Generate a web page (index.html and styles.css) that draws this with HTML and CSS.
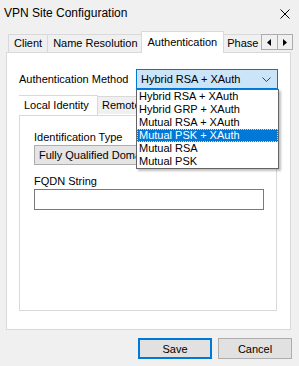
FILE: index.html
```html
<!DOCTYPE html>
<html>
<head>
<meta charset="utf-8">
<link rel="stylesheet" href="styles.css">
</head>
<body>
<div class="dialog">
  <div class="titlebar">
    <span class="title">VPN Site Configuration</span>
    <svg class="close" width="10" height="10" viewBox="0 0 10 10"><path d="M0.5 0.5L9.5 9.5M9.5 0.5L0.5 9.5" stroke="#000" stroke-width="1" fill="none"/></svg>
  </div>
  <div class="tabstrip">
    <div class="tabs">
      <div class="tab first">Client</div>
      <div class="tab">Name Resolution</div>
      <div class="tab selected">Authentication</div>
      <div class="tab">Phase 1</div>
    </div>
    <div class="arrows">
      <div class="arrow"><svg width="5" height="7" viewBox="0 0 5 7"><path d="M4 0L0 3.5L4 7Z" fill="#000"/></svg></div>
      <div class="arrow"><svg width="5" height="7" viewBox="0 0 5 7"><path d="M0 0L4 3.5L0 7Z" fill="#000"/></svg></div>
    </div>
  </div>
  <div class="panel">
    <div class="authrow">
      <span class="label">Authentication Method</span>
      <div class="combo-wrap">
        <div class="combo active">
          <span>Hybrid RSA + XAuth</span>
          <svg class="chev" width="9" height="5" viewBox="0 0 9 5"><path d="M0.5 0.5L4.5 4.5L8.5 0.5" stroke="#444" stroke-width="1" fill="none"/></svg>
        </div>
        <ul class="droplist">
          <li>Hybrid RSA + XAuth</li>
          <li>Hybrid GRP + XAuth</li>
          <li>Mutual RSA + XAuth</li>
          <li class="hl">Mutual PSK + XAuth</li>
          <li>Mutual RSA</li>
          <li>Mutual PSK</li>
        </ul>
      </div>
    </div>
    <div class="innertabs">
      <div class="itab selected">Local Identity</div>
      <div class="itab">Remote Identity</div>
    </div>
    <div class="innerpanel">
      <div class="flabel">Identification Type</div>
      <div class="combo disabled"><span>Fully Qualified Domain Name</span></div>
      <div class="flabel second">FQDN String</div>
      <div class="textbox"></div>
    </div>
  </div>
  <div class="buttons">
    <div class="btn default">Save</div>
    <div class="btn">Cancel</div>
  </div>
</div>
</body>
</html>
```

FILE: styles.css
```css
* { box-sizing: border-box; }
html, body { margin: 0; padding: 0; }
body {
  background: #f0f0f0;
  width: 299px;
  height: 366px;
  overflow: hidden;
  font-family: "Liberation Sans", Arial, sans-serif;
  font-size: 11px;
  color: #000;
}
.dialog { width: 299px; height: 366px; }
.titlebar {
  height: 31px;
  display: flex;
  align-items: flex-start;
  justify-content: space-between;
  padding: 5px 9px 0 4px;
}
.title { font-size: 12px; line-height: 16px; }
.close { margin-top: 4px; }
.tabstrip {
  display: flex;
  align-items: flex-start;
  margin-left: 6px;
  height: 21px;
  position: relative;
  z-index: 2;
}
.tabs {
  display: flex;
  align-items: flex-end;
  width: 255px;
  height: 22px;
  overflow: hidden;
  padding-left: 2px;
}
.tab {
  height: 18px;
  margin-bottom: 1px;
  border: 1px solid #d9d9d9;
  border-bottom: none;
  background: #f0f0f0;
  padding: 0 5px;
  line-height: 16px;
  white-space: nowrap;
  flex: none;
  margin-left: -1px;
}
.tab.first { margin-left: 0; }
.tab.selected {
  height: 22px;
  margin-bottom: 0;
  background: #fff;
  margin-left: -3px;
  margin-right: -2px;
  padding: 0 6px;
  line-height: 20px;
  position: relative;
  z-index: 1;
}
.arrows {
  display: flex;
  margin-top: 3px;
  border: 1px solid #adadad;
  background: #f0f0f0;
}
.arrow {
  width: 15px;
  height: 14px;
  display: flex;
  align-items: center;
  justify-content: center;
}
.arrow + .arrow { border-left: 1px solid #adadad; }
.panel {
  margin-left: 6px;
  width: 285px;
  height: 278px;
  background: #fff;
  border: 1px solid #d9d9d9;
  padding: 16px 12px 0 12px;
}
.authrow {
  display: flex;
  align-items: center;
  height: 20px;
}
.label { width: 117px; }
.combo-wrap { position: relative; z-index: 5; }
.combo {
  height: 20px;
  display: flex;
  align-items: center;
  justify-content: space-between;
  padding: 0 4px 0 4px;
  white-space: nowrap;
  overflow: hidden;
}
.combo.active {
  width: 142px;
  background: #cce4f7;
  border: 1px solid #0078d7;
}
.chev { margin-right: 2px; }
.droplist {
  position: absolute;
  left: 0;
  top: 20px;
  width: 143px;
  margin: 0;
  padding: 0;
  list-style: none;
  background: #fff;
  border: 1px solid #646464;
  box-shadow: 2px 2px 2px rgba(0,0,0,0.25);
}
.droplist li {
  height: 13px;
  line-height: 13px;
  padding-left: 2px;
  white-space: nowrap;
}
.droplist li.hl {
  background: #0078d7;
  color: #fff;
  outline: 1px dotted #e8d8a8;
  outline-offset: -1px;
}
.innertabs {
  display: flex;
  align-items: flex-end;
  height: 20px;
  margin-top: 6px;
  padding-left: 0;
  position: relative;
  z-index: 2;
  width: 117px;
  overflow: hidden;
}
.itab {
  height: 18px;
  margin-bottom: 1px;
  border: 1px solid #d9d9d9;
  border-bottom: none;
  background: #f0f0f0;
  padding: 0 4px;
  line-height: 17px;
  white-space: nowrap;
  flex: none;
}
.itab.selected {
  height: 21px;
  margin-bottom: -1px;
  margin-left: -2px;
  margin-right: -1px;
  background: #fff;
  padding: 0 6px;
  line-height: 18px;
  position: relative;
  z-index: 1;
  width: 81px;
}
.innerpanel {
  width: 258px;
  height: 196px;
  margin-top: 0;
  border: 1px solid #d9d9d9;
  background: #fff;
  padding: 14px 0 0 14px;
}
.flabel { line-height: 14px; height: 14px; }
.combo.disabled {
  margin-top: 1px;
  width: 230px;
  background: #e5e5e5;
  border: 1px solid #adadad;
}
.flabel.second { margin-top: 9px; }
.textbox {
  margin-top: 1px;
  width: 230px;
  height: 21px;
  border: 1px solid #7a7a7a;
  background: #fff;
}
.buttons {
  display: flex;
  justify-content: flex-end;
  gap: 6px;
  padding: 8px 7px 0 0;
}
.btn {
  width: 74px;
  height: 21px;
  border: 1px solid #adadad;
  background: #e1e1e1;
  display: flex;
  align-items: center;
  justify-content: center;
}
.btn.default { border: 2px solid #0078d7; }
```
